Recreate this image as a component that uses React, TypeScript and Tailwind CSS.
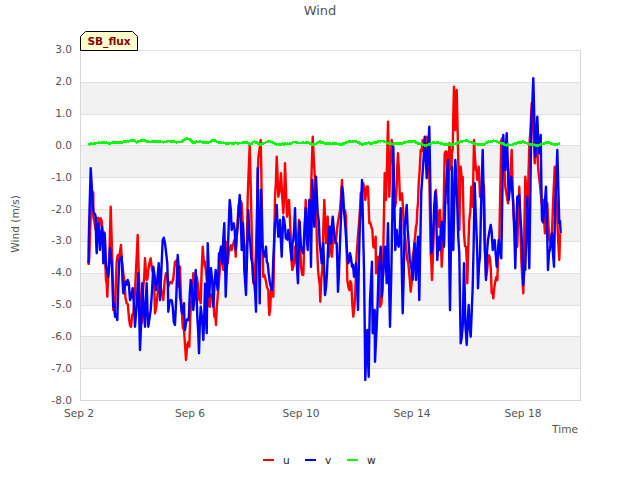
import React from "react";

const noise = (i: number) => {
  const s = Math.sin(i * 12.9898) * 43758.5453;
  return (s - Math.floor(s)) * 2 - 1;
};

// series traced from the chart, as x,y pairs at 3x zoom relative to a crop origin
const toPoints = (ox: number, oy: number, pts: string) =>
  pts.split(" ").map((p) => {
    const [x, y] = p.split(",").map(Number);
    return [ox + x / 3, oy + y / 3];
  });

// fill the traced points out to hourly samples with some noise between them
const hourly = (pts: number[][], amp: number, margin: number) => {
  const out: string[] = [];
  pts.forEach(([x, y], i) => {
    out.push(`${x.toFixed(1)},${y.toFixed(1)}`);
    const next = pts[i + 1];
    if (!next) return;
    const steps = Math.max(2, Math.floor((next[0] - x) / 1.15));
    for (let k = 1; k < steps; k++) {
      const t = k / steps;
      const lo = Math.min(y, next[1]) - margin;
      const hi = Math.max(y, next[1]) + margin;
      const ny = Math.min(hi, Math.max(lo, y + (next[1] - y) * t + noise(i * 7 + k) * amp));
      out.push(`${(x + (next[0] - x) * t).toFixed(1)},${ny.toFixed(1)}`);
    }
  });
  return out.join(" ");
};

const uLine = hourly(
  [
    ...toPoints(80, 130, "26,405 30,320 35,185 40,190 40,260 47,300 52,265 58,290 62,265 68,310 74,340 78,450 82,500 88,380 92,230 97,390 100,540 105,550 110,395 116,385 123,345 128,410 133,450 140,520 147,565 153,590 160,550 168,420 173,315 178,470 185,580 190,470 195,385 200,450 205,420 212,385 220,430 225,550 232,500 240,460 250,510 258,430 265,470 275,460 285,395 290,390 295,470 300,410 305,540 312,600 318,690 322,645 328,650 333,520 340,430 350,440 358,510 362,520 368,350 375,410"),
    ...toPoints(205, 130, "0,400 8,480 15,530 22,500 28,560 33,585 38,500 45,410 50,350 55,420 62,335 68,400 75,355 80,360 88,330 92,380 98,270 104,220 110,220 116,350 120,380 125,420 128,200 134,45 140,300 145,460 150,420 155,290 160,85 167,30 170,200 175,440 182,450 190,480 193,555 198,480 205,500 210,200 215,80 220,200 228,130 235,250 240,100 246,260 252,210 258,340 262,420 270,350 275,400 282,270 288,410 295,435 302,210 308,320 315,280 323,20 330,150 336,340 342,450 346,515 352,420 358,210 363,340 368,260 372,380"),
    ...toPoints(330, 110, "0,400 6,440 10,370 16,400 22,350 30,300 36,210 42,310 48,320 52,510 58,540 64,520 70,620 76,550 80,430 88,330 92,250 100,220 106,270 114,230 118,340 124,350 130,410 137,380 138,490 144,440 150,590 158,540 164,190 168,270 174,35 178,260 185,90 190,170 195,290 200,230 204,130 210,270 216,250 222,370 228,410 235,460 242,545 248,440 254,390 258,350 262,300 266,220 272,120 278,90 284,150 290,80 296,110 302,430 306,510 312,350 318,240 326,350"),
    ...toPoints(440, 70, "0,420 5,590 10,480 14,250 20,245 24,400 28,220 34,300 38,240 42,50 46,180 50,60 54,230 58,480 62,290 68,320 72,490 78,530 82,640 88,450 94,350 98,410 102,210 108,300 112,330 116,290 120,380 128,330 132,350 138,620 144,570 150,565 155,670 160,685 166,635 172,630 178,510 184,210 190,230 196,350 204,400 210,320 215,240 220,420 225,460 232,530 238,350 244,570 250,670 256,320 262,430 268,230 275,100 284,280 292,220 295,300 305,400 310,390 315,490 322,400 328,510 336,485 344,290 350,400 358,570 360,490"),
  ],
  8,
  3,
);

const vLine = hourly(
  [
    ...toPoints(80, 130, "25,400 26,340 32,115 38,220 42,250 47,260 50,370 55,280 60,360 66,290 70,400 74,310 78,410 85,440 90,355 95,400 100,530 105,560 112,570 118,390 125,380 130,490 137,455 143,450 150,510 158,475 165,590 175,430 180,660 187,460 195,590 200,460 205,590 212,540 220,410 228,480 236,400 240,510 248,330 255,340 262,400 265,545 272,510 278,530 285,585 293,375 300,500 305,545 312,520 315,600 320,570 326,570 332,450 340,540 347,420 352,560 357,670 362,530 370,630 375,470"),
    ...toPoints(205, 130, "0,470 5,610 8,340 13,500 18,415 25,530 32,420 38,480 42,370 48,350 52,400 58,280 62,500 68,370 74,210 80,300 86,280 92,360 98,290 104,195 110,360 114,280 118,420 123,495 130,240 136,340 142,400 148,460 153,545 158,115 164,520 168,180 172,340 178,380 183,350 188,400 195,460 200,480 205,390 210,280 215,225 220,320 225,270 230,380 235,260 240,290 245,320 250,300 255,340 260,390 265,330 270,235 275,400 279,460 284,275 288,350 295,370 302,235 308,360 313,210 318,410 322,150 328,290 333,140 338,250 344,340 350,400 355,340 360,495 366,430 372,290"),
    ...toPoints(330, 110, "0,350 4,400 8,320 14,380 20,400 24,545 30,400 36,230 42,300 48,380 54,460 60,430 66,470 72,500 78,460 84,600 90,330 96,210 102,480 106,810 112,660 116,800 120,570 126,455 128,670 134,600 135,755 140,650 146,470 152,410 155,560 160,490 165,410 170,520 174,340 180,650 184,490 190,110 196,420 200,360 206,410 212,295 218,610 224,350 230,285 236,400 242,460 248,510 254,400 258,510 264,380 268,570 274,245 280,160 284,80 290,205 298,50 304,430 310,360 316,245 322,450 328,380"),
    ...toPoints(440, 70, "0,540 5,455 12,530 18,350 24,270 30,720 36,290 40,540 46,270 52,410 58,550 62,820 68,770 72,580 76,760 80,825 86,705 92,800 98,650 104,340 110,500 114,655 120,560 128,240 134,540 138,630 144,510 152,465 158,540 164,510 170,590 176,510 184,565 190,195 196,300 200,190 206,390 214,320 220,400 226,595 232,380 238,375 244,480 250,645 256,600 262,380 268,595 274,150 280,25 286,260 292,140 298,250 302,195 306,450 312,430 318,350 324,600 330,540 336,490 342,590 346,390 352,240 358,460 362,490"),
  ],
  8,
  3,
);

const wLine = hourly(
  [
    ...toPoints(0, 0, "265,432 285,431 295,428 320,428 328,431 340,426 355,428 375,425 400,421 410,427 425,421 450,427 470,424 490,427 505,423 530,427 545,425 560,416 570,418 578,427 600,425 620,428 645,421 660,429 700,430 740,427 750,433 765,425 780,434 810,423 830,433 870,431 880,426 900,429 925,428 940,434 958,426"),
    ...toPoints(320, 0, "0,426 25,431 50,431 65,434 85,425 105,423 125,433 145,428 155,431 175,424 190,423 205,430 245,431 255,427 280,423 295,431 320,436 340,427 385,434 410,431 425,425 440,421 460,430 490,435 505,425 525,423 545,430 560,436 580,433 610,424 625,432 655,436 685,426 705,435 720,431"),
  ],
  0.5,
  0.5,
);

const yTicks = ["3.0", "2.0", "1.0", "0.0", "-1.0", "-2.0", "-3.0", "-4.0", "-5.0", "-6.0", "-7.0", "-8.0"];
const xTicks = ["Sep 2", "Sep 6", "Sep 10", "Sep 14", "Sep 18"];
const bands = [0, 1, 2, 3, 4, 5, 6, 7, 8, 9, 10];
const legend = [
  { name: "u", color: "bg-[#ff0000]" },
  { name: "v", color: "bg-[#0000ff]" },
  { name: "w", color: "bg-[#00ff00]" },
];

export default function App() {
  return (
    <div className="w-[640px] h-[480px] bg-white flex flex-col overflow-hidden font-['DejaVu_Sans',sans-serif] text-[10.6px] leading-[14px] text-[#555555]">
      <div className="h-[50px] pt-[3px] text-center text-[13px] leading-[16px]">Wind</div>

      <div className="flex h-[351px]">
        <div className="w-[30px] flex items-center justify-center pb-[4px]">
          <span className="[writing-mode:vertical-rl] rotate-180 whitespace-nowrap">Wind (m/s)</span>
        </div>
        <div className="w-[42px] h-[365px] -mt-[8px] flex flex-col justify-between items-end">
          {yTicks.map((t) => (
            <span key={t}>{t}</span>
          ))}
        </div>
        <div className="relative ml-[8px] w-[501px] h-[351px]">
          <div className="w-full h-full flex flex-col border-x border-b border-[#d8d8d8]">
            {bands.map((b) => (
              <div
                key={b}
                className={`border-t border-[#e0e0e0] ${b === 2 || b === 8 ? "h-[31px]" : "h-[32px]"} ${
                  b % 2 === 1 ? "bg-[#f2f2f2]" : "bg-white"
                }`}
              />
            ))}
          </div>
          <svg className="absolute left-0 top-0 w-[501px] h-[351px]" viewBox="80 50 501 351" fill="none">
            <polyline points={uLine} stroke="#ff0000" strokeWidth="2.4" strokeLinejoin="round" />
            <polyline points={vLine} stroke="#0000ff" strokeWidth="2.4" strokeLinejoin="round" />
            <polyline points={wLine} stroke="#00ff00" strokeWidth="2.6" strokeLinejoin="round" shapeRendering="crispEdges" />
          </svg>
          <div className="absolute left-0 -top-[19px] w-[58px] h-[20px] flex items-center justify-center font-bold text-[#8b0000]">
            <svg className="absolute left-0 top-0" width="58" height="20" viewBox="0 0 58 20">
              <polygon points="0.5,19.5 0.5,5.5 5.5,0.5 52.5,0.5 57.5,5.5 57.5,19.5" fill="#ffffcc" stroke="#000000" />
            </svg>
            <span className="relative">SB_flux</span>
          </div>
        </div>
      </div>

      <div className="flex ml-[23.5px] mt-[5px]">
        {xTicks.map((t) => (
          <span key={t} className="w-[111px] text-center">
            {t}
          </span>
        ))}
      </div>
      <div className="mt-[2px] w-[578px] text-right">Time</div>

      <div className="mt-[17px] flex justify-center items-center gap-[9px] text-[#222222] pl-[3px]">
        {legend.map((l) => (
          <div key={l.name} className="flex items-center gap-[9px] w-[33px]">
            <span className={`w-[11px] h-[2px] ${l.color}`} />
            <span>{l.name}</span>
          </div>
        ))}
      </div>
    </div>
  );
}
